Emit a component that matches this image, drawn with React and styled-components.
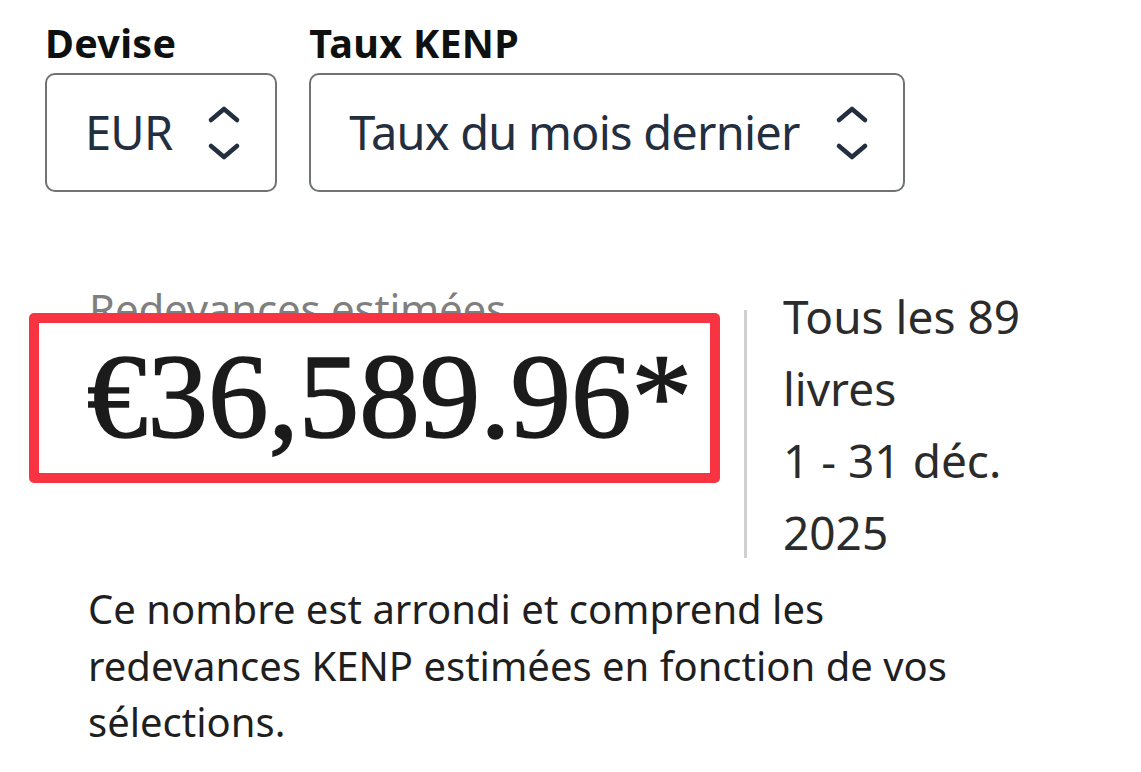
import styled, { createGlobalStyle } from "styled-components";

const GlobalStyle = createGlobalStyle`
  html, body {
    margin: 0;
    padding: 0;
    background: #fff;
  }
  body {
    font-family: "Noto Sans", "Open Sans", sans-serif;
    color: #0f1111;
  }
`;

const Chevrons = () => (
  <ChevronIcon width="34" height="56" viewBox="0 0 34 56" fill="none">
    <path d="M4 15 L17 4 L30 15" />
    <path d="M4 41 L17 52 L30 41" />
  </ChevronIcon>
);

const App = () => {
  return (
    <>
      <GlobalStyle />
      <Page>
        <Filters>
          <Field>
            <FieldLabel>Devise</FieldLabel>
            <Select>
              <SelectText>EUR</SelectText>
              <Chevrons />
            </Select>
          </Field>
          <Field>
            <FieldLabel>Taux KENP</FieldLabel>
            <Select>
              <SelectText>Taux du mois dernier</SelectText>
              <Chevrons />
            </Select>
          </Field>
        </Filters>

        <Summary>
          <RoyaltyCol>
            <RoyaltyLabel>Redevances estimées</RoyaltyLabel>
            <AmountBox>
              <Amount>€36,589.96*</Amount>
            </AmountBox>
          </RoyaltyCol>
          <Divider />
          <MetaCol>
            <MetaLine>Tous les 89 livres</MetaLine>
            <MetaLine>1 - 31 déc. 2025</MetaLine>
          </MetaCol>
        </Summary>

        <Note>
          Ce nombre est arrondi et comprend les redevances KENP estimées en
          fonction de vos sélections.
        </Note>
      </Page>
    </>
  );
};

const Page = styled.div`
  padding: 21px 0 0 45px;
`;

// devise / taux
const Filters = styled.div`
  display: flex;
  gap: 32px;
`;
const Field = styled.div`
  display: flex;
  flex-direction: column;
  gap: 8px;
`;
const FieldLabel = styled.span`
  font-size: 39.5px;
  line-height: 44px;
  font-weight: 700;
  color: #0f1111;
  letter-spacing: 0.3px;
`;
const Select = styled.div`
  display: inline-flex;
  align-items: center;
  gap: 35px;
  height: 119px;
  box-sizing: border-box;
  padding: 0 34px 0 38px;
  border: 2px solid #707373;
  border-radius: 10px;
  background: #fff;
`;
const SelectText = styled.span`
  font-size: 47px;
  line-height: 1;
  color: #232f3e;
  letter-spacing: -0.8px;
  white-space: nowrap;
`;
const ChevronIcon = styled.svg`
  flex-shrink: 0;
  stroke: #232f3e;
  stroke-width: 4.6;
  stroke-linecap: round;
  stroke-linejoin: round;
`;

// redevances
const Summary = styled.div`
  display: flex;
  align-items: flex-start;
  margin: 88px 0 0 -16px;
`;
const RoyaltyCol = styled.div`
  display: flex;
  flex-direction: column;
  padding-top: 4px;
`;
const RoyaltyLabel = styled.span`
  padding-left: 60px;
  font-size: 42px;
  line-height: 50px;
  color: #7f7f7f;
  letter-spacing: -0.2px;
`;
const AmountBox = styled.div`
  position: relative;
  width: 691px;
  height: 170px;
  box-sizing: border-box;
  margin-top: -21px;
  padding: 13px 0 0 48px;
  border: 10px solid #f83443;
  border-radius: 5px;
  background: #fff;
`;
const Amount = styled.span`
  display: block;
  font-family: "Liberation Serif", "Times New Roman", serif;
  font-size: 121px;
  line-height: 121px;
  color: #1b1b1b;
  -webkit-text-stroke: 1.6px #1b1b1b;
  white-space: nowrap;
`;
const Divider = styled.div`
  width: 3px;
  height: 248px;
  margin: 30px 0 0 24px;
  background: #d0d0d0;
`;
const MetaCol = styled.div`
  display: flex;
  flex-direction: column;
  width: 290px;
  margin-left: 36px;
`;
const MetaLine = styled.span`
  font-size: 46px;
  line-height: 72px;
  color: #2b2b2b;
  letter-spacing: 0;
`;

// note
const Note = styled.p`
  margin: 13px 0 0 43px;
  width: 900px;
  font-size: 40px;
  line-height: 56.5px;
  color: #1f1f1f;
`;

export default App;
